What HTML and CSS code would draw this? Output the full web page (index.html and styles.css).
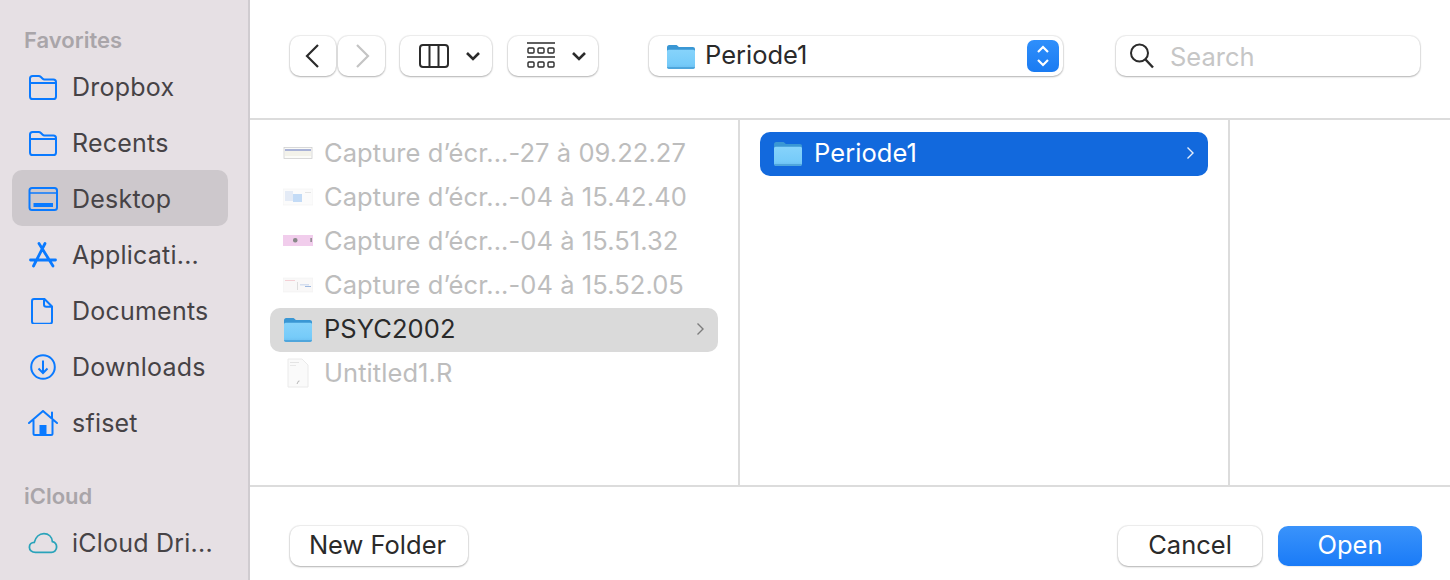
FILE: index.html
```html
<!DOCTYPE html>
<html lang="en">
<head>
  <meta charset="UTF-8" />
  <title>Open</title>
  <link rel="stylesheet" href="styles.css">
</head>
<body>

<svg class="defs" width="0" height="0">
  <defs>
    <linearGradient id="folderFront" x1="0" y1="0" x2="0" y2="1">
      <stop offset="0" stop-color="#86d3fb"/>
      <stop offset="0.75" stop-color="#76cbf9"/>
      <stop offset="1" stop-color="#68bdf0"/>
    </linearGradient>
    <symbol id="folderColor" viewBox="0 0 30 30">
      <path d="M1 6.500C1 5 1.800 4 3.200 4h6.600c1 0 1.500.4 2.100 1.100l.9 1h14c1.400 0 2.200.9 2.200 2.200V12H1z" fill="#3a97d4"/>
      <path d="M1 10.500c0-1 .7-1.700 1.700-1.700h24.600c1 0 1.700.7 1.700 1.700v15.300c0 1.300-.9 2.200-2.200 2.200H3.200C1.900 28 1 27.100 1 25.800z" fill="url(#folderFront)"/>
      <path d="M1 26h28c0 1.300-.9 2-2.200 2H3.200C1.900 28 1 27.300 1 26z" fill="#4fa6dc"/>
    </symbol>
    <symbol id="sideFolder" viewBox="0 0 30 26">
      <path d="M2 6V4.600C2 3 3 2 4.600 2h6c1 0 1.600.3 2.300 1l1.800 1.800c.5.500 1 .7 1.700.7h9c1.600 0 2.600 1 2.600 2.600v14.300c0 1.600-1 2.600-2.600 2.600H4.600C3 25 2 24 2 22.400z M2 9h26.600" fill="none" stroke="#0a7aff" stroke-width="2"/>
    </symbol>
  </defs>
</svg>

<div class="dialog">

  <aside class="sidebar">
    <h3 class="side-title">Favorites</h3>
    <ul class="side-list">
      <li class="side-item">
        <svg class="side-icon" viewBox="0 0 30 26"><use href="#sideFolder"/></svg>
        <span>Dropbox</span>
      </li>
      <li class="side-item">
        <svg class="side-icon" viewBox="0 0 30 26"><use href="#sideFolder"/></svg>
        <span>Recents</span>
      </li>
      <li class="side-item active">
        <svg class="side-icon" viewBox="0 0 30 26">
          <rect x="1.500" y="2" width="27.500" height="22" rx="2.500" fill="none" stroke="#0a7aff" stroke-width="2"/>
          <path d="M2 7h27" stroke="#0a7aff" stroke-width="1.500"/>
          <rect x="5.500" y="17" width="19.500" height="4" fill="#0a7aff"/>
        </svg>
        <span>Desktop</span>
      </li>
      <li class="side-item">
        <svg class="side-icon" viewBox="0 0 30 26">
          <path d="M17 1.500 5.500 24M11 1.500 25 24M2.500 18h25" fill="none" stroke="#0a7aff" stroke-width="2.800" stroke-linecap="round"/>
        </svg>
        <span>Applicati...</span>
      </li>
      <li class="side-item">
        <svg class="side-icon" viewBox="0 0 30 26">
          <path d="M6 1h10.500L24 8.500v15c0 1.400-.8 2.200-2.200 2.200H6.200C4.800 25.700 4 24.900 4 23.500V3.200C4 1.800 4.800 1 6 1z M16 1v5.500c0 1.500.8 2.300 2.300 2.300H24" fill="none" stroke="#0a7aff" stroke-width="2"/>
        </svg>
        <span>Documents</span>
      </li>
      <li class="side-item">
        <svg class="side-icon" viewBox="0 0 30 26">
          <circle cx="15" cy="13" r="11.800" fill="none" stroke="#0a7aff" stroke-width="2"/>
          <path d="M15 6.500v12.500M10.500 14.500 15 19l4.500-4.500" fill="none" stroke="#0a7aff" stroke-width="2"/>
        </svg>
        <span>Downloads</span>
      </li>
      <li class="side-item">
        <svg class="side-icon" viewBox="0 0 30 26">
          <path d="M1 13 15 1l14 12M5.500 10.500v13c0 1 .5 1.500 1.500 1.500h16c1 0 1.500-.5 1.500-1.500v-13M24 8V2.500" fill="none" stroke="#0a7aff" stroke-width="2" stroke-linecap="round"/>
          <rect x="11.500" y="15" width="7" height="10" fill="#0a7aff"/>
        </svg>
        <span>sfiset</span>
      </li>
    </ul>
    <h3 class="side-title icloud">iCloud</h3>
    <ul class="side-list">
      <li class="side-item">
        <svg class="side-icon" viewBox="0 0 32 26">
          <path d="M8 23C4 23 1.500 20.500 1.500 17.500c0-3 2.300-5.200 5.200-5.200C8 7 12 3 17 3c5 0 8.500 3.500 9 8.500 2.800.7 4.500 3 4.500 5.700 0 3.300-2.500 5.800-5.500 5.800z" fill="none" stroke="#2aa3ba" stroke-width="1.900"/>
        </svg>
        <span>iCloud Dri...</span>
      </li>
    </ul>
  </aside>

  <div class="main">

    <header class="toolbar">
      <button class="tool nav">
        <svg width="18" height="26" viewBox="0 0 18 26"><path d="M14 2 3 13l11 11" fill="none" stroke="#2b2b2b" stroke-width="2.200"/></svg>
      </button>
      <button class="tool nav next">
        <svg width="18" height="26" viewBox="0 0 18 26"><path d="M4 2l11 11L4 24" fill="none" stroke="#c4c4c4" stroke-width="2.200"/></svg>
      </button>
      <button class="tool view">
        <svg width="30" height="24" viewBox="0 0 30 24">
          <rect x="1" y="1" width="28" height="22" rx="3" fill="none" stroke="#2b2b2b" stroke-width="2"/>
          <path d="M10.500 1v22M19.500 1v22" stroke="#2b2b2b" stroke-width="2"/>
        </svg>
        <svg class="chev" width="16" height="10" viewBox="0 0 16 10"><path d="M2 2l6 6 6-6" fill="none" stroke="#2b2b2b" stroke-width="2.600"/></svg>
      </button>
      <button class="tool group">
        <svg width="28" height="28" viewBox="0 0 28 28">
          <path d="M0 1h28M0 15h28" stroke="#2b2b2b" stroke-width="1.600"/>
          <g fill="none" stroke="#2b2b2b" stroke-width="1.400">
            <rect x="1" y="6" width="6" height="5" rx="1"/><rect x="11" y="6" width="6" height="5" rx="1"/><rect x="21" y="6" width="6" height="5" rx="1"/>
            <rect x="1" y="20" width="6" height="5" rx="1"/><rect x="11" y="20" width="6" height="5" rx="1"/><rect x="21" y="20" width="6" height="5" rx="1"/>
          </g>
        </svg>
        <svg class="chev" width="16" height="10" viewBox="0 0 16 10"><path d="M2 2l6 6 6-6" fill="none" stroke="#2b2b2b" stroke-width="2.600"/></svg>
      </button>
      <div class="tool path">
        <svg class="folder" viewBox="0 0 30 30"><use href="#folderColor"/></svg>
        <span class="path-name">Periode1</span>
        <span class="stepper">
          <svg width="16" height="24" viewBox="0 0 16 24"><path d="M3 8l5-5 5 5M3 16l5 5 5-5" fill="none" stroke="#fff" stroke-width="2.200"/></svg>
        </span>
      </div>
      <div class="tool search">
        <svg width="28" height="28" viewBox="0 0 28 28"><circle cx="11.500" cy="11" r="8.500" fill="none" stroke="#2b2b2b" stroke-width="2"/><path d="M17.500 17.500 25 25.500" stroke="#2b2b2b" stroke-width="2.400"/></svg>
        <span class="placeholder">Search</span>
      </div>
    </header>

    <section class="browser">
      <div class="column first">
        <div class="row dim">
          <svg class="thumb" viewBox="0 0 30 18"><rect width="28" height="11" x="1" y="3.500" fill="#fbfbf8" stroke="#cfcfcf" stroke-width=".8"/><rect x="2" y="5" width="26" height="2" fill="#aab3d6"/><rect x="2" y="7" width="26" height="5" fill="#f3f2ea"/></svg>
          <span>Capture d’écr...-27 à 09.22.27</span>
        </div>
        <div class="row dim">
          <svg class="thumb" viewBox="0 0 30 18"><rect width="30" height="16" y="1" fill="#fbfbfb" stroke="#eee" stroke-width=".5"/><rect x="2" y="3" width="8" height="10" fill="#e4ebf6"/><rect x="10" y="6" width="9" height="8" fill="#c3dbf6"/><rect x="22" y="4" width="6" height="1" fill="#e4e4e4"/></svg>
          <span>Capture d’écr...-04 à 15.42.40</span>
        </div>
        <div class="row dim">
          <svg class="thumb" viewBox="0 0 30 18"><rect width="30" height="11" y="3" fill="#f1cdec"/><rect x="10" y="6" width="4.500" height="4.500" rx="2" fill="#888"/><rect x="27.500" y="6" width="1.200" height="4" fill="#777"/></svg>
          <span>Capture d’écr...-04 à 15.51.32</span>
        </div>
        <div class="row dim">
          <svg class="thumb" viewBox="0 0 30 18"><rect width="30" height="14" y="2" fill="#f9f8f8" stroke="#eee" stroke-width=".5"/><rect x="2" y="4" width="10" height="1" fill="#f3cfd4"/><rect x="14" y="6" width="1" height="8" fill="#ddd"/><rect x="17" y="8" width="9" height="1.500" fill="#d6dff0"/><rect x="22" y="10" width="6" height="1" fill="#9db8e0"/></svg>
          <span>Capture d’écr...-04 à 15.52.05</span>
        </div>
        <div class="row hover">
          <svg class="folder" viewBox="0 0 30 30"><use href="#folderColor"/></svg>
          <span>PSYC2002</span>
          <svg class="arrow" width="9" height="14" viewBox="0 0 9 14"><path d="M1.500 1.500 7 7l-5.500 5.500" fill="none" stroke="#7c7c7c" stroke-width="1.400"/></svg>
        </div>
        <div class="row dim">
          <svg class="thumb" viewBox="0 0 30 30"><path d="M5 1h14l6 6v22H5z" fill="#fafafa" stroke="#eaeaea"/><rect x="7" y="4" width="9" height="1" fill="#e4e4e4"/><rect x="7" y="7" width="6" height="1" fill="#e8e8e8"/><path d="M14 26l1.500-3h1" stroke="#999" stroke-width=".7" fill="none"/></svg>
          <span>Untitled1.R</span>
        </div>
      </div>
      <div class="column second">
        <div class="row selected">
          <svg class="folder" viewBox="0 0 30 30"><use href="#folderColor"/></svg>
          <span>Periode1</span>
          <svg class="arrow" width="9" height="14" viewBox="0 0 9 14"><path d="M1.500 1.500 7 7l-5.500 5.500" fill="none" stroke="#e6eefb" stroke-width="1.400"/></svg>
        </div>
      </div>
      <div class="column third"></div>
    </section>

    <footer class="actions">
      <button class="btn new-folder">New Folder</button>
      <button class="btn cancel">Cancel</button>
      <button class="btn open">Open</button>
    </footer>

  </div>
</div>

</body>
</html>
```

FILE: styles.css
```css
:root {
  --side-bg: #e6e0e4;
  --line: #dcdcdc;
  --text: #2a2a2a;
  --side-text: #464346;
  --dim: #bdbdbd;
  --blue: #1269dd;
}

* {
  box-sizing: border-box;
}

html, body {
  margin: 0;
  padding: 0;
}

body {
  width: 1450px;
  height: 580px;
  overflow: hidden;
  background-color: white;
  color: var(--text);
  font-family: Inter, "Liberation Sans", sans-serif;
  font-size: 25.5px;
}

.defs {
  display: block;
  height: 0;
}

.dialog {
  display: flex;
  height: 580px;
}

/* sidebar */

.sidebar {
  width: 250px;
  flex-shrink: 0;
  padding: 28px 20px 0 12px;
  background-color: var(--side-bg);
  border-right: 2px solid #d0ccd0;
  overflow: hidden;
}

.side-title {
  margin: 0 0 5px 12px;
  height: 25px;
  line-height: 25px;
  font-size: 22px;
  font-weight: 600;
  color: #a9a5a9;
}

.icloud {
  margin-top: 34px;
  margin-bottom: 5px;
}

.side-list {
  list-style: none;
  margin: 0;
  padding: 0;
}

.side-item {
  display: flex;
  align-items: center;
  gap: 14px;
  height: 56px;
  padding: 2px 0 0 16px;
  border-radius: 10px;
  color: var(--side-text);
  font-size: 25px;
  letter-spacing: 0.22px;
  white-space: nowrap;
}

.side-item.active {
  background-color: #cdc8cc;
}

.side-icon {
  width: 30px;
  height: 26px;
  flex-shrink: 0;
}

/* toolbar */

.main {
  flex: 1;
  display: flex;
  flex-direction: column;
  min-width: 0;
}

.toolbar {
  display: flex;
  align-items: center;
  flex-shrink: 0;
  height: 120px;
  padding: 0 0 6px 40px;
  border-bottom: 2px solid var(--line);
}

.tool {
  display: flex;
  align-items: center;
  height: 40px;
  padding: 0;
  background-color: white;
  border: none;
  border-radius: 10px;
  box-shadow: 0 0 1px 1px rgba(0, 0, 0, 0.07), 0 1px 2px rgba(0, 0, 0, 0.25);
  font-family: inherit;
}

.nav {
  width: 46px;
  justify-content: center;
}

.next {
  margin-left: 2px;
  width: 47px;
}

.view {
  width: 92px;
  margin-left: 15px;
  padding-left: 19px;
}

.view .chev {
  margin-left: 16px;
}

.group {
  width: 90px;
  margin-left: 16px;
  padding-left: 19px;
}

.group .chev {
  margin-left: 16px;
}

.path {
  width: 414px;
  margin-left: 51px;
  padding: 0 4px 0 17px;
}

.path .folder {
  margin-right: 9px;
}

.path-name {
  flex: 1;
  font-size: 25.5px;
  padding-bottom: 3px;
}

.stepper {
  display: flex;
  align-items: center;
  justify-content: center;
  width: 32px;
  height: 32px;
  border-radius: 7px;
  background: linear-gradient(#2f8ffb, #1a7bf2);
}

.search {
  width: 304px;
  margin-left: 53px;
  padding-left: 12px;
}

.placeholder {
  margin-left: 14px;
  color: #c6c6c6;
  font-size: 25.5px;
  padding-top: 1px;
}

/* columns */

.browser {
  flex: 1;
  display: flex;
  min-height: 0;
}

.column {
  padding: 12px 20px 0;
  border-right: 2px solid var(--line);
}

.first {
  width: 490px;
  padding-right: 20px;
}

.second {
  width: 490px;
  padding-right: 20px;
}

.third {
  flex: 1;
  border-right: none;
}

.row {
  display: flex;
  align-items: center;
  height: 44px;
  padding: 0 13px 2px;
  border-radius: 10px;
  letter-spacing: 0.07px;
  white-space: nowrap;
}

.row span {
  flex: 1;
  padding-bottom: 2px;
}

.dim {
  color: var(--dim);
}

.hover {
  background-color: #dadada;
}

.selected {
  background-color: var(--blue);
  color: white;
}

.thumb,
.row .folder {
  flex-shrink: 0;
  margin-right: 11px;
}

.thumb {
  width: 30px;
  height: 30px;
}

.folder {
  width: 30px;
  height: 30px;
  flex-shrink: 0;
}

/* bottom buttons */

.actions {
  display: flex;
  align-items: flex-start;
  flex-shrink: 0;
  height: 95px;
  padding: 39px 28px 0 40px;
  border-top: 2px solid var(--line);
}

.btn {
  height: 40px;
  padding: 0 0 4px;
  border: none;
  border-radius: 10px;
  background-color: white;
  color: var(--text);
  font-family: inherit;
  font-size: 25.5px;
  box-shadow: 0 0 1px 1px rgba(0, 0, 0, 0.07), 0 1px 2px rgba(0, 0, 0, 0.25);
}

.new-folder {
  width: 178px;
  padding-right: 3px;
}

.cancel {
  width: 144px;
  margin-left: auto;
}

.open {
  width: 144px;
  margin-left: 16px;
  background: linear-gradient(#3a93fb, #1a7bf7);
  color: white;
  box-shadow: 0 1px 1px rgba(0, 0, 0, 0.08);
}
```
